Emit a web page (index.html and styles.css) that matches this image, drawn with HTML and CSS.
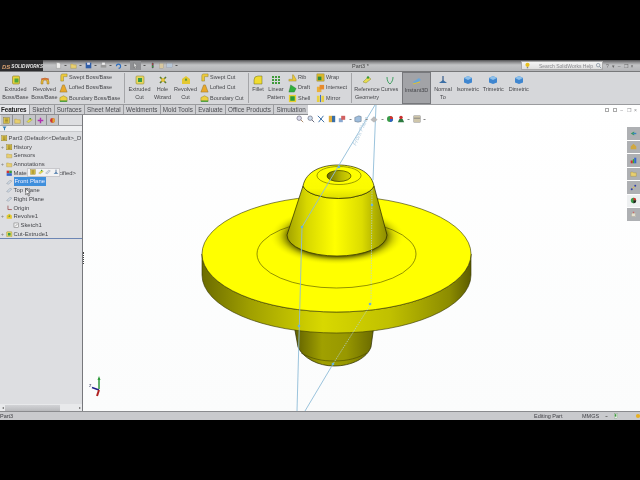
FILE: index.html
```html
<!DOCTYPE html>
<html lang="en">
<head>
<meta charset="utf-8">
<title>SolidWorks Part3</title>
<link rel="stylesheet" href="styles.css">
</head>
<body>
<svg class="defs" width="0" height="0">
  <defs>
    <g id="i-boss"><rect x="1.5" y="1" width="7" height="8" rx="1" fill="#e6d23c" stroke="#8a7a20" stroke-width=".6"/><rect x="3.5" y="3.5" width="4" height="4" fill="#4fa83c"/></g>
    <g id="i-rev"><path d="M1 7a4 4 0 0 1 8 0v2H7V7a2 2 0 0 0-4 0v2H1z" fill="#e8b83a" stroke="#9a7420" stroke-width=".5"/><path d="M1 4h8" stroke="#c33" stroke-width=".8"/></g>
    <g id="i-swept"><path d="M2 9V3a2 2 0 0 1 2-2h5v3H5v5z" fill="#ecc93c" stroke="#8a7a20" stroke-width=".5"/></g>
    <g id="i-loft"><path d="M4 1h2l3 8H1z" fill="#e8a82c" stroke="#8a6a20" stroke-width=".5"/></g>
    <g id="i-bound"><path d="M1 4l4-2 4 2v4H1z" fill="#eed040" stroke="#8a7a20" stroke-width=".5"/><path d="M1 8h8" stroke="#3a9a3a" stroke-width="1.4"/></g>
    <g id="i-cut"><rect x="1" y="1" width="8" height="8" rx="1" fill="#e6d860" stroke="#8a7a20" stroke-width=".5"/><rect x="3" y="3" width="4" height="4" fill="#3b9c48"/></g>
    <g id="i-hole"><path d="M2 2l6 6M8 2L2 8" stroke="#5a7a30" stroke-width="1.6"/><circle cx="5" cy="5" r="2" fill="#e8c63c"/></g>
    <g id="i-star"><path d="M5 1l4 3v5H1V4z" fill="#e4c832"/><path d="M5 3l1.2 2.6H3.8z" fill="#2e8a3a"/></g>
    <g id="i-fillet"><path d="M1 9V5a4 4 0 0 1 4-4h4v8z" fill="#f0dc30" stroke="#6a6a20" stroke-width=".5"/></g>
    <g id="i-pat" fill="#3f9a3a"><rect x="1" y="1" width="2" height="2"/><rect x="4" y="1" width="2" height="2"/><rect x="7" y="1" width="2" height="2"/><rect x="1" y="4" width="2" height="2"/><rect x="4" y="4" width="2" height="2"/><rect x="7" y="4" width="2" height="2"/><rect x="1" y="7" width="2" height="2"/><rect x="4" y="7" width="2" height="2"/><rect x="7" y="7" width="2" height="2"/></g>
    <g id="i-rib"><path d="M1 9h8V7L6 2H5v5H1z" fill="#e8c638" stroke="#8a7a20" stroke-width=".4"/></g>
    <g id="i-draft"><path d="M3 1l6 4-2 4H1z" fill="#2fb03c" stroke="#1a6a24" stroke-width=".4"/></g>
    <g id="i-shell"><rect x="1" y="1" width="8" height="8" fill="#e8d030"/><rect x="2.5" y="2.5" width="5" height="5" fill="#2a9a38"/></g>
    <g id="i-wrap"><rect x="1" y="1" width="8" height="8" fill="#d9b72c" stroke="#80701c" stroke-width=".4"/><rect x="2" y="4" width="4" height="4" fill="#2e8a3a"/></g>
    <g id="i-inter"><path d="M1 3h5v6H1z" fill="#eab03a"/><path d="M4 1h5v5H4z" fill="#e88a2c"/></g>
    <g id="i-mirror"><path d="M1 2h3v7H1zM6 2h3v7H6z" fill="#e8d040"/><path d="M5 1v8" stroke="#3060c0" stroke-width="1"/></g>
    <g id="i-ref"><path d="M1 7l5-5 3 2-5 4z" fill="#e6dc50" stroke="#7a7a20" stroke-width=".4"/><circle cx="6" cy="2.5" r="1.2" fill="#3a9a3a"/></g>
    <g id="i-curve"><path d="M2 2c0 3 1 6 3 7M8 2C8 5 7 7 5 9" fill="none" stroke="#3f9f60" stroke-width="1"/></g>
    <g id="i-inst"><path d="M1 6l6-4 2 2-6 4z" fill="#6aa6d8"/><path d="M1 8l7-2" stroke="#e0c030" stroke-width="1"/></g>
    <g id="i-norm"><path d="M5 1v5" stroke="#345a8a" stroke-width="1.2"/><path d="M1 8h8L5 5z" fill="#3a6ea5"/></g>
    <g id="i-cube"><path d="M5 1l4 2v4.500L5 9 1 7.500V3z" fill="#3f86d0"/><path d="M5 1l4 2-4 2-4-2z" fill="#8fc0ea"/></g>
    <g id="i-hist"><rect x="1" y="1" width="8" height="8" fill="#d8c048" stroke="#7a6a20" stroke-width=".5"/><path d="M3 3h4M3 5h4M3 7h4" stroke="#5a4a10" stroke-width=".6"/></g>
    <g id="i-fold"><path d="M1 3h3l1 1h4v5H1z" fill="#e8cf70" stroke="#9a8430" stroke-width=".5"/></g>
    <g id="i-plane"><path d="M1 7l5-5 3 1-5 5z" fill="#cfd8e2" stroke="#6a7788" stroke-width=".5"/></g>
    <g id="i-origin"><path d="M3 1v6h6" fill="none" stroke="#8a3030" stroke-width="1"/></g>
    <g id="i-mat"><rect x="1" y="1" width="4" height="4" fill="#c33"/><rect x="5" y="1" width="4" height="4" fill="#3a9a3a"/><rect x="1" y="5" width="8" height="4" fill="#36c"/></g>
    <g id="i-sk"><rect x="1.500" y="1.500" width="7" height="7" fill="#f2f2f2" stroke="#666" stroke-width=".7"/><path d="M3 7l4-4" stroke="#555" stroke-width=".7"/></g>
  </defs>
</svg>

<div class="letterbox"></div>

<main class="app">
  <header class="titlebar">
    <div class="brand"><span class="brand-ds">DS</span><span class="brand-name">SOLIDWORKS</span></div>
    <div class="quick">
      <svg class="qi" viewBox="0 0 10 10"><path d="M2 1h4l2 2v6H2z" fill="#eee" stroke="#888" stroke-width=".6"/></svg><i class="car"></i>
      <svg class="qi" viewBox="0 0 10 10"><use href="#i-fold"/></svg><i class="car"></i>
      <svg class="qi" viewBox="0 0 10 10"><rect x="1" y="1" width="8" height="8" fill="#2f5ea8"/><rect x="3" y="1" width="4" height="3" fill="#dde"/></svg><i class="car"></i>
      <svg class="qi" viewBox="0 0 10 10"><rect x="1" y="4" width="8" height="4" fill="#999"/><rect x="3" y="1" width="4" height="3" fill="#eee"/></svg><i class="car"></i>
      <svg class="qi" viewBox="0 0 10 10"><path d="M2 6a3 3 0 1 1 3 3" fill="none" stroke="#2f6fc0" stroke-width="1.600"/></svg><i class="car"></i>
      <span class="qi-active"><svg class="qi" viewBox="0 0 10 10"><path d="M3 1l4 5H5l1 3-1 .5L4 6.500 3 8z" fill="#eee" stroke="#555" stroke-width=".4"/></svg></span><i class="car"></i>
      <svg class="qi" viewBox="0 0 10 10"><rect x="4" y="1" width="2.500" height="8" rx="1" fill="#555"/><circle cx="5.200" cy="3" r="1" fill="#d33"/><circle cx="5.200" cy="6.500" r="1" fill="#3a3"/></svg>
      <svg class="qi" viewBox="0 0 10 10"><rect x="2" y="2" width="6" height="7" fill="#d8c8a0" stroke="#888" stroke-width=".4"/></svg>
      <svg class="qi" viewBox="0 0 10 10"><rect x="1" y="2" width="8" height="6" fill="#b8c8d8" stroke="#889" stroke-width=".4"/></svg><i class="car"></i>
    </div>
    <div class="doc-title">Part3 *</div>
    <div class="search">
      <svg class="qi" viewBox="0 0 10 10"><circle cx="5" cy="4" r="3" fill="#e8c020"/><rect x="4" y="7" width="2" height="2" fill="#888"/></svg>
      <span class="search-text">Search SolidWorks Help</span>
      <svg class="qi" viewBox="0 0 10 10"><circle cx="4.500" cy="4.500" r="2.500" fill="none" stroke="#678" stroke-width=".8"/><path d="M6.500 6.500L9 9" stroke="#678"/></svg>
    </div>
    <div class="winbtns"><span>?</span><span>▾</span><span>–</span><span>❐</span><span>×</span></div>
  </header>

  <section class="ribbon">
    <div class="rb-item w29"><svg class="ri" viewBox="0 0 10 10"><use href="#i-boss"/></svg><span>Extruded<br>Boss/Base</span></div>
    <div class="rb-item w29"><svg class="ri" viewBox="0 0 10 10"><use href="#i-rev"/></svg><span>Revolved<br>Boss/Base</span></div>
    <div class="rb-stack w62">
      <div><svg viewBox="0 0 10 10"><use href="#i-swept"/></svg>Swept Boss/Base</div>
      <div><svg viewBox="0 0 10 10"><use href="#i-loft"/></svg>Lofted Boss/Base</div>
      <div><svg viewBox="0 0 10 10"><use href="#i-bound"/></svg>Boundary Boss/Base</div>
    </div>
    <div class="rb-sep"></div>
    <div class="rb-item w23"><svg class="ri" viewBox="0 0 10 10"><use href="#i-cut"/></svg><span>Extruded<br>Cut</span></div>
    <div class="rb-item w23"><svg class="ri" viewBox="0 0 10 10"><use href="#i-hole"/></svg><span>Hole<br>Wizard</span></div>
    <div class="rb-item w23"><svg class="ri" viewBox="0 0 10 10"><use href="#i-star"/></svg><span>Revolved<br>Cut</span></div>
    <div class="rb-stack w48 inset">
      <div><svg viewBox="0 0 10 10"><use href="#i-swept"/></svg>Swept Cut</div>
      <div><svg viewBox="0 0 10 10"><use href="#i-loft"/></svg>Lofted Cut</div>
      <div><svg viewBox="0 0 10 10"><use href="#i-bound"/></svg>Boundary Cut</div>
    </div>
    <div class="rb-sep"></div>
    <div class="rb-item w12"><svg class="ri" viewBox="0 0 10 10"><use href="#i-fillet"/></svg><span>Fillet</span></div>
    <div class="rb-item w24"><svg class="ri" viewBox="0 0 10 10"><use href="#i-pat"/></svg><span>Linear<br>Pattern</span></div>
    <div class="rb-stack w28">
      <div><svg viewBox="0 0 10 10"><use href="#i-rib"/></svg>Rib</div>
      <div><svg viewBox="0 0 10 10"><use href="#i-draft"/></svg>Draft</div>
      <div><svg viewBox="0 0 10 10"><use href="#i-shell"/></svg>Shell</div>
    </div>
    <div class="rb-stack w35">
      <div><svg viewBox="0 0 10 10"><use href="#i-wrap"/></svg>Wrap</div>
      <div><svg viewBox="0 0 10 10"><use href="#i-inter"/></svg>Intersect</div>
      <div><svg viewBox="0 0 10 10"><use href="#i-mirror"/></svg>Mirror</div>
    </div>
    <div class="rb-sep tight"></div>
    <div class="rb-item w24"><svg class="ri" viewBox="0 0 10 10"><use href="#i-ref"/></svg><span>Reference<br>Geometry</span></div>
    <div class="rb-item w21"><svg class="ri" viewBox="0 0 10 10"><use href="#i-curve"/></svg><span>Curves</span></div>
    <div class="rb-item w29 active"><svg class="ri" viewBox="0 0 10 10"><use href="#i-inst"/></svg><span>Instant3D</span></div>
    <div class="rb-item w24"><svg class="ri" viewBox="0 0 10 10"><use href="#i-norm"/></svg><span>Normal<br>To</span></div>
    <div class="rb-item w26"><svg class="ri" viewBox="0 0 10 10"><use href="#i-cube"/></svg><span>Isometric</span></div>
    <div class="rb-item w26"><svg class="ri" viewBox="0 0 10 10"><use href="#i-cube"/></svg><span>Trimetric</span></div>
    <div class="rb-item w26"><svg class="ri" viewBox="0 0 10 10"><use href="#i-cube"/></svg><span>Dimetric</span></div>
  </section>

  <section class="work">
    <nav class="tabs">
      <span class="tab on">Features</span><span class="tab">Sketch</span><span class="tab">Surfaces</span><span class="tab">Sheet Metal</span><span class="tab">Weldments</span><span class="tab">Mold Tools</span><span class="tab">Evaluate</span><span class="tab">Office Products</span><span class="tab">Simulation</span>
    </nav>

    <aside class="panel">
      <div class="ptabs">
        <span class="ptab"><svg viewBox="0 0 10 10"><use href="#i-hist"/></svg></span>
        <span class="ptab"><svg viewBox="0 0 10 10"><use href="#i-fold"/></svg></span>
        <span class="ptab"><svg viewBox="0 0 10 10"><use href="#i-ref"/></svg></span>
        <span class="ptab"><svg viewBox="0 0 10 10"><path d="M5 1v8M1 5h8" stroke="#b030b0" stroke-width="2"/></svg></span>
        <span class="ptab"><svg viewBox="0 0 10 10"><circle cx="5" cy="5" r="3.500" fill="#c33"/><path d="M5 1.500a3.500 3.500 0 0 1 0 7z" fill="#da3"/></svg></span>
      </div>
      <div class="filter"><svg viewBox="0 0 10 10"><path d="M1 1h8L6 5v4L4 8V5z" fill="#2f7fb8"/></svg></div>
      <ul class="tree">
        <li class="root"><svg viewBox="0 0 10 10"><use href="#i-hist"/></svg>Part3 (Default&lt;&lt;Default&gt;_D</li>
        <li class="exp"><svg viewBox="0 0 10 10"><use href="#i-hist"/></svg>History</li>
        <li><svg viewBox="0 0 10 10"><use href="#i-fold"/></svg>Sensors</li>
        <li class="exp"><svg viewBox="0 0 10 10"><use href="#i-fold"/></svg>Annotations</li>
        <li class="mat"><svg viewBox="0 0 10 10"><use href="#i-mat"/></svg>Material &lt;not specified&gt;
          <span class="ctx">
            <svg viewBox="0 0 10 10"><use href="#i-hist"/></svg><svg viewBox="0 0 10 10"><use href="#i-ref"/></svg><svg viewBox="0 0 10 10"><use href="#i-plane"/></svg><svg viewBox="0 0 10 10"><use href="#i-norm"/></svg>
          </span>
        </li>
        <li class="sel"><svg viewBox="0 0 10 10"><use href="#i-plane"/></svg><b>Front Plane</b></li>
        <li><svg viewBox="0 0 10 10"><use href="#i-plane"/></svg>Top Plane</li>
        <li><svg viewBox="0 0 10 10"><use href="#i-plane"/></svg>Right Plane</li>
        <li><svg viewBox="0 0 10 10"><use href="#i-origin"/></svg>Origin</li>
        <li class="exp"><svg viewBox="0 0 10 10"><use href="#i-star"/></svg>Revolve1</li>
        <li class="child"><svg viewBox="0 0 10 10"><use href="#i-sk"/></svg>Sketch1</li>
        <li class="exp"><svg viewBox="0 0 10 10"><use href="#i-cut"/></svg>Cut-Extrude1</li>
      </ul>
      <div class="rollback"></div>
      <div class="pscroll"><i class="arr">◂</i><span class="thumb"></span><i class="arr">▸</i></div>
      <svg class="cursor" viewBox="0 0 8 12"><path d="M1 1v8l2-2 1.500 3.500 1.500-.6L4.500 6.500H7z" fill="#fff" stroke="#222" stroke-width=".7"/></svg>
    </aside>

    <div class="viewport">
      <div class="splitter"></div>
      <svg class="model" viewBox="83 105 557 306" aria-label="Yellow revolved part">
        <defs>
          <linearGradient id="gBoss" x1="0" x2="1" y1="0" y2="0">
            <stop offset="0" stop-color="#5e5e00"/><stop offset=".35" stop-color="#a0a000"/><stop offset=".65" stop-color="#989800"/><stop offset="1" stop-color="#6a6a00"/>
          </linearGradient>
          <linearGradient id="gSide" x1="0" x2="1" y1="0" y2="0">
            <stop offset="0" stop-color="#6c6c00"/><stop offset=".18" stop-color="#a0a000"/><stop offset=".45" stop-color="#d8d800"/><stop offset=".7" stop-color="#c0c000"/><stop offset=".92" stop-color="#8c8c00"/><stop offset="1" stop-color="#5c5c00"/>
          </linearGradient>
          <linearGradient id="gCone" x1="0" x2="1" y1="0" y2="0">
            <stop offset="0" stop-color="#a2a200"/><stop offset=".2" stop-color="#d8d800"/><stop offset=".48" stop-color="#ffff00"/><stop offset=".75" stop-color="#dcdc00"/><stop offset="1" stop-color="#8c8c00"/>
          </linearGradient>
          <linearGradient id="gDome" x1="0" x2="0" y1="0" y2="1">
            <stop offset="0" stop-color="#ffff00"/><stop offset=".7" stop-color="#fbfb00"/><stop offset="1" stop-color="#dcdc00"/>
          </linearGradient>
          <linearGradient id="gHole" x1="0" x2="1" y1="0" y2="0">
            <stop offset="0" stop-color="#6a6a00"/><stop offset=".6" stop-color="#b8b800"/><stop offset="1" stop-color="#d8d800"/>
          </linearGradient>
          <radialGradient id="gHalo">
            <stop offset=".72" stop-color="#6a6a00" stop-opacity=".95"/><stop offset=".84" stop-color="#b8b800" stop-opacity=".55"/><stop offset="1" stop-color="#ffff00" stop-opacity="0"/>
          </radialGradient>
        </defs>
        <path d="M294 325L298 347C303 358 318 366 334 366C352 366 367 358 371 347L374 325Z" fill="url(#gBoss)" stroke="#2a2a00" stroke-width=".7"/>
        <path d="M301 353C312 359 322 361 334 361C348 361 358 358 367 353" fill="none" stroke="#3a3a00" stroke-width=".5"/>
        <path d="M202 254V275A134.500 58 0 0 0 471 275V254A134.500 58 0 0 1 202 254Z" fill="url(#gSide)" stroke="#333300" stroke-width=".6"/>
        <ellipse cx="336.500" cy="254" rx="134.500" ry="58" fill="#ffff00" stroke="#333300" stroke-width=".6"/>
        <ellipse cx="337" cy="236" rx="68" ry="29" fill="url(#gHalo)"/>
        <ellipse cx="336.500" cy="254" rx="79.500" ry="34" fill="none" stroke="#4a4a00" stroke-width=".6"/>
        <path d="M287 235A50 21 0 0 0 387 235L374 186A36 15 0 0 1 303 186Z" fill="url(#gCone)" stroke="#262600" stroke-width=".7"/>
        <path d="M303 186C306 171 322 165 338 165C355 165 371 171 374 186A36 15 0 0 1 303 186Z" fill="url(#gDome)" stroke="#262600" stroke-width=".7"/>
        <ellipse cx="339" cy="175.500" rx="22" ry="9" fill="#ffff00" stroke="#3a3a00" stroke-width=".5"/>
        <ellipse cx="339" cy="176" rx="12" ry="5.500" fill="url(#gHole)" stroke="#262600" stroke-width=".6"/>
        <g fill="none" stroke="#8fbcd8" stroke-width=".9">
          <path d="M375 105L302 227L297 411"/>
          <path d="M376 105L373 180"/>
          <path d="M333 364L305 411"/>
        </g>
        <g fill="none" stroke="#b5d3dc" stroke-width=".7" stroke-dasharray="1.500 1">
          <path d="M372 190L371 304L333 364"/>
        </g>
        <g fill="#68b4dc">
          <circle cx="339" cy="167" r="1.300"/><circle cx="302" cy="227" r="1.300"/><circle cx="299" cy="326" r="1.300"/><circle cx="372" cy="205" r="1.300"/><circle cx="370" cy="304" r="1.300"/><circle cx="333" cy="364" r="1.300"/>
        </g>
        <text class="planelabel" transform="translate(356 146) rotate(-66)">Front Plane</text>
      </svg>

      <div class="hud">
        <svg viewBox="0 0 10 10"><circle cx="4" cy="4" r="2.800" fill="#dde" stroke="#667" stroke-width=".8"/><path d="M6 6l3 3" stroke="#a86" stroke-width="1.200"/></svg>
        <svg viewBox="0 0 10 10"><circle cx="4" cy="4" r="2.800" fill="#cde" stroke="#667" stroke-width=".8"/><path d="M6 6l3 3" stroke="#667" stroke-width="1.200"/></svg>
        <svg viewBox="0 0 10 10"><path d="M1 1l8 8M8 1L2 9" stroke="#3a6ea5" stroke-width="1.200"/></svg>
        <svg viewBox="0 0 10 10"><rect x="1" y="1" width="4" height="8" fill="#e0b040"/><rect x="5" y="1" width="4" height="8" fill="#3a6ea5"/></svg>
        <svg viewBox="0 0 10 10"><rect x="1" y="4" width="5" height="5" fill="#8aa8d0"/><rect x="4" y="1" width="5" height="5" fill="#d06060"/></svg><i class="car"></i>
        <svg viewBox="0 0 10 10"><path d="M1 3l5-2 3 1v6l-4 1-4-1z" fill="#9fbddc" stroke="#456" stroke-width=".5"/></svg><i class="car"></i>
        <svg viewBox="0 0 10 10"><path d="M1 6l4-4 4 4-4 3z" fill="#bbb" stroke="#999" stroke-width=".4"/></svg><i class="car"></i>
        <svg viewBox="0 0 10 10"><circle cx="5" cy="5" r="3.800" fill="#3a9a48"/><path d="M5 1.200a3.800 3.800 0 0 1 3.800 3.800H5z" fill="#d83030"/><path d="M5 5h3.800A3.800 3.800 0 0 1 5 8.800z" fill="#3060c8"/></svg>
        <svg viewBox="0 0 10 10"><circle cx="5" cy="3" r="2.200" fill="#c83030"/><path d="M1 9l2-4h4l2 4z" fill="#2c7a40"/></svg><i class="car"></i>
        <svg viewBox="0 0 10 10"><rect x="1" y="1" width="8" height="8" fill="#cfc6aa" stroke="#777" stroke-width=".5"/><path d="M1 4h8" stroke="#777"/></svg><i class="car"></i>
      </div>

      <div class="docbtns"><i></i><i></i><span>–</span><span>❐</span><span>×</span></div>

      <div class="taskpane">
        <span><svg viewBox="0 0 10 10"><path d="M1 5l5-3v6z" fill="#3a9a58"/><rect x="4" y="4" width="5" height="2" fill="#3a86c0"/></svg></span>
        <span><svg viewBox="0 0 10 10"><path d="M1 5l4-4 4 4v4H1z" fill="#d0a840"/></svg></span>
        <span><svg viewBox="0 0 10 10"><rect x="1" y="5" width="3" height="4" fill="#c33"/><rect x="4" y="3" width="2" height="6" fill="#3a3"/><rect x="6" y="1" width="3" height="8" fill="#36c"/></svg></span>
        <span><svg viewBox="0 0 10 10"><use href="#i-fold"/></svg></span>
        <span><svg viewBox="0 0 10 10"><path d="M2 8l6-6" stroke="#e0c030" stroke-width="1.200"/><circle cx="2.500" cy="7.500" r="1.400" fill="#3040b0"/><circle cx="7.500" cy="2.500" r="1.400" fill="#3040b0"/></svg></span>
        <span class="cur"><svg viewBox="0 0 10 10"><circle cx="5" cy="5" r="3.800" fill="#3a9a48"/><path d="M5 1.200a3.800 3.800 0 0 1 3.800 3.800H5z" fill="#d83030"/><path d="M5 5h3.800A3.800 3.800 0 0 1 5 8.800z" fill="#222"/></svg></span>
        <span><svg viewBox="0 0 10 10"><rect x="2" y="3" width="6" height="5" fill="#e6e0d0" stroke="#998" stroke-width=".5"/><rect x="4" y="1" width="2" height="2" fill="#c66"/></svg></span>
      </div>

      <svg class="triad" viewBox="0 0 20 24">
        <path d="M10 14V3" stroke="#2f9a3c" stroke-width="1.500"/><path d="M8.500 5L10 1l1.500 4z" fill="#2f9a3c"/>
        <path d="M10 15L3 12.500" stroke="#20208c" stroke-width="1.500"/><path d="M10 15l-2 6" stroke="#b02020" stroke-width="2"/>
        <text class="triad-l" x="0" y="12">z</text>
      </svg>
    </div>
  </section>

  <footer class="status">
    <span class="st-name">Part3</span>
    <span class="st-mode">Editing Part</span>
    <span class="st-units">MMGS</span>
    <i class="car"></i>
    <svg viewBox="0 0 10 10"><rect x="2" y="1" width="6" height="8" fill="#dfe8df" stroke="#6a8a6a" stroke-width=".5"/><rect x="3" y="2" width="2.500" height="4" fill="#3a9a3a"/></svg>
    <svg class="st-q" viewBox="0 0 10 10"><circle cx="5" cy="5" r="3.500" fill="#e8b020"/></svg>
  </footer>
</main>

<div class="letterbox"></div>
</body>
</html>
```

FILE: styles.css
```css
* { box-sizing: border-box; }

html, body {
  margin: 0;
  padding: 0;
  width: 640px;
  height: 480px;
  overflow: hidden;
  background: #000;
  font-family: "Liberation Sans", Arial, sans-serif;
  font-size: 6px;
  color: #3c3c40;
}

.defs { position: absolute; }

.letterbox { height: 60px; background: #000; }

.app {
  height: 360px;
  display: flex;
  flex-direction: column;
  background: #fff;
  filter: blur(.35px);
}

/* title bar */
.titlebar {
  height: 12px;
  flex: none;
  display: flex;
  align-items: center;
  background: linear-gradient(#4e4e50 0, #8c8c8e 20%, #c2c3c5 45%, #b4b5b8 100%);
  border-bottom: 1px solid #77787a;
}
.brand {
  width: 43px;
  height: 100%;
  flex: none;
  display: flex;
  align-items: center;
  gap: 1px;
  padding: 2px 0 0 2px;
  background: #2c2c2e;
  color: #e8e8e8;
  font-style: italic;
}
.brand-ds { color: #d8a070; font-size: 6px; font-weight: bold; }
.brand-name { font-size: 4.600px; font-weight: bold; }
.quick {
  margin-left: 12px;
  display: flex;
  align-items: center;
  gap: 1.500px;
  width: 130px;
  flex: none;
}
.qi { width: 7px; height: 7px; flex: none; }
.qi-active { display: flex; padding: 1px 2px; background: #8f9093; }
.car { display: inline-block; width: 3px; flex: none; border-top: 1.500px solid #555; border-left: 1.500px solid transparent; border-right: 1.500px solid transparent; height: 0; }
.quick .car { margin-right: 2px; }
.doc-title { width: 30px; margin-left: 167px; color: #444; font-size: 5.500px; flex: none; white-space: nowrap; }
.search {
  margin-left: 139px;
  width: 82px;
  height: 9px;
  flex: none;
  display: flex;
  align-items: center;
  padding: 0 2px;
  gap: 2px;
  background: linear-gradient(#f4f4f4, #dedede);
  border: 1px solid #a8a8a8;
  color: #8a8a8e;
  font-size: 5px;
}
.search-text { flex: 1; padding-left: 6px; white-space: nowrap; }
.winbtns { display: flex; gap: 3px; margin-left: 3px; color: #666; font-size: 5px; }

/* ribbon */
.ribbon {
  height: 33px;
  flex: none;
  display: flex;
  background: #d6d7da;
  padding-left: 1px;
  line-height: 7.500px;
  color: #45464a;
  border-bottom: 1px solid #9a9b9e;
}
.rb-item {
  flex: none;
  display: flex;
  flex-direction: column;
  align-items: center;
  padding-top: 3px;
  text-align: center;
  white-space: nowrap;
  font-size: 5.500px;
}
.ri { width: 10px; height: 10px; flex: none; margin-bottom: 1px; }
.rb-stack {
  flex: none;
  display: flex;
  flex-direction: column;
  justify-content: space-between;
  font-size: 5.500px;
  white-space: nowrap;
}
.rb-stack.inset { width: 48px; padding-left: 3px; }
.rb-stack div { display: flex; align-items: center; gap: 1px; height: 10.600px; }
.rb-stack svg { width: 9px; height: 9px; flex: none; }
.rb-sep { width: 1px; flex: none; margin: 1px 3px; background: #a4a5a8; }
.rb-sep.tight { margin-left: 0; }
.w12 { width: 12px; } .w21 { width: 21px; } .w24 { width: 24px; }
.w23 { width: 23px; } .w26 { width: 25.500px; } .w28 { width: 28px; } .w29 { width: 29px; }
.w35 { width: 35px; } .w48 { width: 48px; } .w62 { width: 62px; }
.active { margin-left: 2px; background: #a2a3a7; border: 1px solid #77787c; }

/* work area */
.work {
  flex: 1;
  display: flex;
  position: relative;
  min-height: 0;
}
.tabs {
  position: absolute;
  left: 0;
  top: 0;
  z-index: 3;
  width: 308px;
  height: 10px;
  display: flex;
  background: #d0d1d4;
  border-bottom: 1px solid #8c8d90;
  white-space: nowrap;
  line-height: 9px;
  font-size: 6.300px;
  color: #4a4b50;
}
.tab { padding: 0 2.200px; border-left: 1px solid #9a9b9f; }
.tab.on { width: 29px; background: #e6e7ea; color: #222; font-weight: bold; border-left: 0; padding: 0 0 0 1px; letter-spacing: -.1px; }

.panel {
  width: 83px;
  flex: none;
  position: relative;
  display: flex;
  flex-direction: column;
  padding-top: 10px;
  background: #dddee1;
  border-right: 1px solid #77787c;
}
.ptabs {
  height: 11px;
  flex: none;
  display: flex;
  gap: 0;
  padding-left: 1px;
  border-bottom: 1px solid #a4a5a8;
}
.ptab { width: 11.500px; display: flex; align-items: center; justify-content: center; background: #c4c5c8; border-right: 1px solid #8f9093; }
.ptab svg { width: 7px; height: 7px; }
.filter { height: 6px; flex: none; padding-left: 2px; background: #eeeff1; border-bottom: 1px solid #c8c9cc; }
.filter svg { display: block; width: 5px; height: 5px; }
.tree {
  list-style: none;
  margin: 0;
  padding: 2px 0 0 1px;
  line-height: 8.700px;
  font-size: 5.900px;
  white-space: nowrap;
  overflow: hidden;
  color: #45464a;
}
.tree li { height: 8.700px; display: flex; align-items: center; padding-left: 5px; position: relative; gap: 1px; }
.tree li.root { padding-left: 0; }
.tree svg { width: 6.500px; height: 6.500px; flex: none; }
.tree li.exp::before { content: "+"; position: absolute; left: 0; font-size: 5px; color: #777; }
.tree .child { padding-left: 12px; }
.tree .sel b { font-weight: normal; background: #3f8fdc; color: #eef; padding: 0 1px; }
.ctx {
  position: absolute;
  left: 26px;
  top: -1px;
  height: 9px;
  width: 33px;
  display: flex;
  align-items: center;
  gap: 1.500px;
  padding-left: 2px;
  background: #f2f2f3;
  border: 1px solid #c8c8cc;
}
.ctx svg { width: 6px; height: 6px; }
.rollback { height: 1px; background: #6c86b4; flex: none; }
.pscroll {
  margin-top: auto;
  height: 7px;
  flex: none;
  display: flex;
  align-items: center;
  background: #e8e9eb;
  font-size: 4px;
  color: #666;
}
.arr { width: 5px; font-style: normal; text-align: center; flex: none; }
.thumb { width: 55px; height: 6px; background: linear-gradient(#d2d3d6, #b8b9bc); }
.pscroll .arr:last-child { margin-left: auto; }
.cursor { position: absolute; left: 25px; top: 83px; width: 6px; height: 9px; }

.viewport { flex: 1; position: relative; background: linear-gradient(#fff, #fbfcfc); min-width: 0; }
.splitter { position: absolute; left: 0; top: 147px; width: 3px; height: 12px; border-left: 1px dotted #444; }
.model { display: block; width: 557px; height: 306px; }
.planelabel { font-family: "Liberation Sans", Arial, sans-serif; font-size: 6px; fill: #b6cfe0; font-style: italic; }

.hud {
  position: absolute;
  left: 213px;
  top: 10px;
  display: flex;
  align-items: center;
  gap: 2.500px;
}
.hud svg { width: 8px; height: 8px; flex: none; }
.hud .car { border-top-color: #888; }

.docbtns {
  position: absolute;
  right: 3px;
  top: 2px;
  display: flex;
  gap: 3.500px;
  align-items: center;
  color: #8a8a8e;
  font-size: 5px;
  line-height: 6px;
}
.docbtns i { display: block; width: 4px; height: 4px; border: 1px solid #aaa; }

.taskpane {
  position: absolute;
  right: 0;
  top: 22px;
  width: 13px;
  display: flex;
  flex-direction: column;
  gap: 1px;
}
.taskpane span {
  height: 12.500px;
  display: flex;
  align-items: center;
  justify-content: center;
  background: #aeb0b3;
}
.taskpane span.cur { background: #eef0f1; }
.taskpane svg { width: 7px; height: 7px; }

.triad { position: absolute; left: 6px; top: 270px; width: 20px; height: 24px; }
.triad-l { font-size: 5px; fill: #557; font-family: "Liberation Sans", Arial, sans-serif; }

/* status */
.status {
  height: 9px;
  flex: none;
  display: flex;
  align-items: center;
  background: #c9cacd;
  border-top: 1px solid #8a8b8e;
  font-size: 5.500px;
  color: #404146;
  white-space: nowrap;
}
.status svg { width: 6px; height: 6px; flex: none; }
.st-name { width: 534px; flex: none; }
.st-mode { width: 48px; flex: none; }
.st-units { width: 23px; flex: none; }
.status .car { margin-right: 5px; border-top-color: #777; }
.st-q { margin-left: 16px; }
```
